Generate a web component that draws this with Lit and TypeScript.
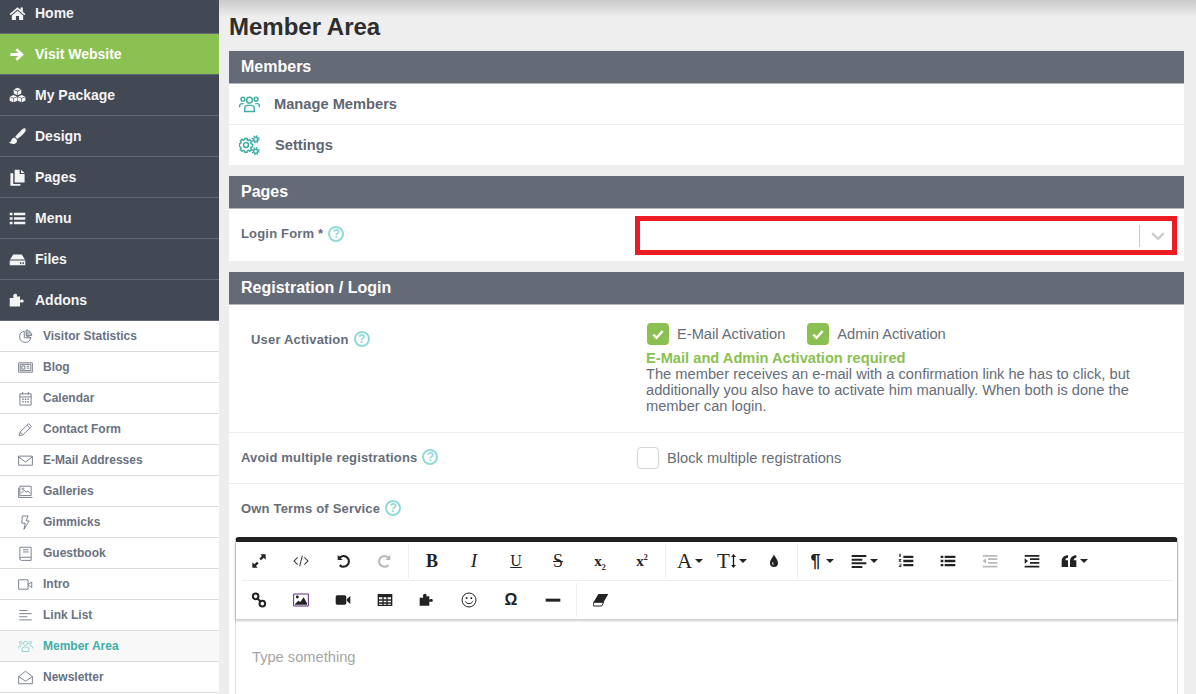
import { LitElement, html, css, svg } from "lit";
import { customElement } from "lit/decorators.js";

const solid: Record<string, unknown> = {
  home: svg`<path d="M12 3.200 .8 12.600l1.500 1.800L12 6.200l9.700 8.200 1.500-1.800-3.700-3.100V3.600h-3.200v3.200z"/><path d="M12 8 4 14.800V21h5.800v-5.400h4.400V21H20v-6.200z"/>`,
  arrow: svg`<path d="M2 10h11L9 6l2.600-2.800L21 12l-9.400 8.800L9 18l4-4H2z"/>`,
  cubes: svg`<path d="M12 1l5 2.200-5 2.200-5-2.200zM6.600 4l5 2.200v5.300l-5-2.200zM12.400 6.200l5-2.200v5.300l-5 2.200z"/><path d="M6.300 11.200l5 2.200-5 2.200-5-2.200zM.9 14.200l5 2.200v5.300l-5-2.200zM6.700 16.400l5-2.200v5.300l-5 2.200z"/><path d="M17.700 11.200l5 2.200-5 2.200-5-2.200zM12.300 14.200l5 2.200v5.300l-5-2.200zM18.100 16.400l5-2.200v5.300l-5 2.200z"/>`,
  brush: svg`<path d="M23 .8c-1-.9-2.700-.3-4.100.9C16 4.300 11 9.500 8.800 12.500l3 2.900c3-2 8.600-7 11-10.200C23.700 3.700 24 1.900 23 .8z"/><path d="M7.800 13.300c-3 .3-4.200 2.600-4.600 4.400-.3 1.300-1.300 2.300-3.200 2.500 2.200 2.400 7.600 3.400 10.300.6 1.600-1.700 1.100-3.900 0-5.200z"/>`,
  files: svg`<path d="M8 1h7v6h7v12H8z"/><path d="M17 1l5 4.500h-5z"/><path d="M2 6h4v15h10v2.500H2z"/>`,
  list: svg`<path d="M1 4h4v3.500H1zM7 4h16v3.500H7zM1 10.200h4v3.500H1zM7 10.200h16v3.500H7zM1 16.500h4V20H1zM7 16.500h16V20H7z"/>`,
  hdd: svg`<path d="M6 5h12l4.500 7h-21z"/><path fill-rule="evenodd" d="M1 13.500h22V20H1zM16.500 16a1.200 1.200 0 1 0 .1 0zM20 16a1.200 1.200 0 1 0 .1 0z"/>`,
  puzzle: svg`<path d="M9 2.500c2 0 2.700 1.300 2.200 2.800l-.3 1.200h4.600v5l1.300-.7c1.500-.6 4 0 4 2s-2.500 2.500-4 1.900l-1.300-.7v6.500H1V8.500h5.400l-.4-2.800C5.700 4 7 2.500 9 2.500z"/>`,
  link: svg`<g fill="none" stroke="currentColor" stroke-width="3"><circle cx="7" cy="6.500" r="4.200"/><circle cx="17" cy="17.500" r="4.200"/><path d="M9.500 10l5 4"/></g>`,
  image: svg`<path d="M1 3h22v18H1z" fill="none" stroke="#5b2a86" stroke-width="1.500"/><path d="M3 18l5-5 3 2 5-7 5 9v2H3z"/><circle cx="6.500" cy="7.500" r="2.200"/>`,
  video: svg`<path d="M1 7.500A2.500 2.500 0 0 1 3.500 5h11A2.500 2.500 0 0 1 17 7.500v9a2.500 2.500 0 0 1-2.500 2.500h-11A2.500 2.500 0 0 1 1 16.500zM18 10.500l5-4.500v12l-5-4.500z"/>`,
  table: svg`<path fill-rule="evenodd" d="M1 3h22v18H1zM3 8v3h5V8zm7 0v3h4V8zm6 0v3h5V8zM3 13v2.500h5V13zm7 0v2.500h4V13zm6 0v2.500h5V13zM3 17.500V19h5v-1.500zm7 0V19h4v-1.500zm6 0V19h5v-1.500z"/>`,
  minus: svg`<path d="M1 10h22v4.500H1z"/>`,
  expand: svg`<path d="M14 2h8v8l-3-3-4 4-2.500-2.500 4-4zM10 22H2v-8l3 3 4-4 2.500 2.500-4 4z"/>`,
  undo: svg`<path d="M4 3v7.500h7.500L8.700 7.700a6.300 6.300 0 1 1-.5 9.200l-2.300 2.500A9.700 9.700 0 1 0 6.300 5.300z"/>`,
  redo: svg`<path d="M20 3v7.500h-7.500l2.800-2.800a6.300 6.300 0 1 0 .5 9.200l2.300 2.500a9.700 9.700 0 1 1-.4-14.100z"/>`,
  drop: svg`<path fill-rule="evenodd" d="M12 2c1 4 6 8 6 13a6 6 0 0 1-12 0c0-5 5-9 6-13zm-2.500 12c-.6 2.500 1 4.500 2.500 4.500-1-1-1.500-2.500-1-4.500z"/>`,
  alignLeft: svg`<path d="M1 3h22v3H1zM1 8.500h16v3H1zM1 14h22v3H1zM1 19.500h16v3H1z"/>`,
  ol: svg`<path d="M8 4h15v3.500H8zM8 10.200h15v3.500H8zM8 16.500h15V20H8zM2 1h2v5H2zM1 9h4v1l-2 2h2v1H1v-1l2-2H1zM1 16h4v5H1v-1h3v-1H2v-1h2v-1H1z"/>`,
  ul: svg`<path d="M1 4h4v3.500H1zM7 4h16v3.500H7zM1 10.200h4v3.500H1zM7 10.200h16v3.500H7zM1 16.500h4V20H1zM7 16.500h16V20H7z"/>`,
  outdent: svg`<path d="M1 3h22v2.600H1zM9 8h14v2.600H9zM9 13.400h14V16H9zM1 19h22v2.600H1zM6 8v8l-5-4z"/>`,
  indent: svg`<path d="M1 3h22v2.600H1zM9 8h14v2.600H9zM9 13.400h14V16H9zM1 19h22v2.600H1zM1 8v8l5-4z"/>`,
  quote: svg`<path d="M10.500 11H6.600c0-2.300 1.300-4 3.900-4V3.500C5 3.500 1 7 1 12.500V21h9.500zM23 11h-3.900c0-2.300 1.300-4 3.900-4V3.500c-5.500 0-9.500 3.500-9.500 9V21H23z"/>`,
  eraser: svg`<path d="M8 3h15l-7 12H1z"/><path d="M1 15.500h15L13 21H1.500L0 20z" fill="#fff" stroke="currentColor" stroke-width="1.500"/>`,
};

const line: Record<string, unknown> = {
  pie: svg`<path d="M10 3.500a9 9 0 1 0 10.500 10.500H10z"/><path d="M13 1.500a9 9 0 0 1 9 9h-9z"/><path d="M13 11l8 3M13 5h6M13 8h8"/>`,
  card: svg`<path d="M1 4.500h22v15H1z"/><path d="M3.500 7h17v10h-17zM6 9.500h5v5H6zM14 10h4M14 13h4"/>`,
  calendar: svg`<path d="M3 4.500h18v18H3zM3 9.500h18M7.500 1.500v4M16.500 1.500v4"/><path d="M7 13h2M11 13h2M15 13h2M7 17h2M11 17h2M15 17h2" stroke-width="2.400"/>`,
  pencil: svg`<path d="M2 22l1.500-6L17 2.500l4.500 4.500L8 20.500zM14.500 5l4.500 4.500M3.500 16 8 20.500"/>`,
  mail: svg`<path d="M1 5h22v14.500H1zM1 6l11 8.500L23 6"/>`,
  gallery: svg`<path d="M3 3.500h18v15H3zM1 21.500h22M1 6v15.500"/><path d="M5 15l5-5 3 3 3-2 4 4"/><circle cx="8" cy="7.500" r="1.300"/>`,
  bolt: svg`<path d="M7 1.500h9l-3 8h5L9.500 23l2-10H6z"/>`,
  book: svg`<path d="M3 20V2h18v21H5.500A2.500 2.500 0 0 1 3 20.500 2.500 2.500 0 0 1 5.500 18H21M8 6h9M8 9.500h9"/>`,
  camera: svg`<path d="M1 4.500h15v15H1zM16 12l6-4v9z"/>`,
  lines: svg`<path d="M2 4h13M2 9h20M2 14h13M2 19h20"/>`,
  users: svg`<circle cx="12" cy="7" r="3.300"/><circle cx="4.500" cy="6" r="2.200"/><circle cx="19.500" cy="6" r="2.200"/><path d="M6.500 20v-3.500a3.500 3.500 0 0 1 3.500-3.500h4a3.500 3.500 0 0 1 3.500 3.500V20zM.8 15v-1.500A2.500 2.500 0 0 1 3.300 11h2.200M23.200 15v-1.500a2.500 2.500 0 0 0-2.500-2.500h-2.200"/>`,
  envelope: svg`<path d="M1 10.500 12 2l11 8.500V22H1zM1 10.500l11 7.500 11-7.500"/>`,
  gears: svg`<path d="M9.500 6l1.500.4 1.300-1 2 2-.9 1.300.6 1.500 1.500.3v2.900l-1.500.3-.6 1.500.9 1.300-2 2-1.300-.9-1.500.6-.3 1.500H6.600l-.3-1.500-1.500-.6-1.300.9-2-2 .9-1.300-.6-1.500L.3 13V10l1.500-.3.6-1.500-.9-1.300 2-2 1.300 1 1.500-.6.300-1.300h2.900z"/><circle cx="8" cy="11.500" r="2.800"/><circle cx="19" cy="5" r="2.300"/><circle cx="19" cy="18.500" r="2.300"/><circle cx="19" cy="5" r="3.800" stroke-dasharray="1.500 1.500" stroke-width="1.800"/><circle cx="19" cy="18.500" r="3.800" stroke-dasharray="1.500 1.500" stroke-width="1.800"/>`,
  smile: svg`<circle cx="12" cy="12" r="10.500"/><path d="M6.500 14c1.500 4.500 9.500 4.500 11 0"/><path d="M8.500 8v2.500M15.500 8v2.500" stroke-width="2.500"/>`,
  code: svg`<path d="M7 6.500 1.500 12 7 17.500M17 6.500l5.500 5.500-5.500 5.500M14 4l-4 16"/>`,
};

const solidIcon = (n: string, cls = "") => html`<svg class="ic ${cls}" viewBox="0 0 24 24" fill="currentColor">${solid[n]}</svg>`;
const lineIcon = (n: string, cls = "") => html`<svg class="ic ${cls}" viewBox="0 0 24 24" fill="none" stroke="currentColor" stroke-width="1.500">${line[n]}</svg>`;

const mainNav: [string, string, boolean][] = [
  ["home", "Home", false], ["arrow", "Visit Website", true], ["cubes", "My Package", false],
  ["brush", "Design", false], ["files", "Pages", false], ["list", "Menu", false],
  ["hdd", "Files", false], ["puzzle", "Addons", false],
];
const subNav: [string, string][] = [
  ["pie", "Visitor Statistics"], ["card", "Blog"], ["calendar", "Calendar"], ["pencil", "Contact Form"],
  ["mail", "E-Mail Addresses"], ["gallery", "Galleries"], ["bolt", "Gimmicks"], ["book", "Guestbook"],
  ["camera", "Intro"], ["lines", "Link List"], ["users", "Member Area"], ["envelope", "Newsletter"],
];

@customElement("app-root")
export class AppRoot extends LitElement {
  static styles = css`
    :host { display: flex; width: 1196px; height: 694px; overflow: hidden; background: #eeeeee;
      font-family: "Liberation Sans", Arial, sans-serif; color: #636a76; }
    * { box-sizing: border-box; }
    .ic { display: block; flex: none; }
    .side { width: 219px; flex: none; background: #fff; margin-top: -7px; }
    .nav { height: 41px; display: flex; align-items: center; background: #424854; color: #f4f4f4;
      border-bottom: 1px solid #626873; font-size: 14px; font-weight: bold; padding-left: 9px; }
    .nav .ic { width: 17px; height: 17px; margin-right: 9px; }
    .nav.on { background: #8bc152; color: #fff; }
    .sub { height: 31px; display: flex; align-items: center; border-bottom: 1px solid #dcdcdc;
      font-size: 12px; font-weight: bold; color: #6b7280; padding-left: 18px; }
    .sub .ic { width: 15px; height: 15px; margin-right: 10px; stroke-width: 1.400; }
    .sub.on { background: #f8f8f8; color: #3fada8; }
    .sub.on .ic { color: #7fd0cc; }
    .main { flex: 1; min-width: 0; padding: 0 12px 0 10px;
      background: linear-gradient(#cacaca, #eeeeee 17px) no-repeat; }
    h1 { margin: 0; height: 51px; padding-top: 13px; font-size: 24px; line-height: 27px; font-weight: bold; color: #2e2e2e; }
    .head { height: 33px; background: #656b76; border-bottom: 1px solid #b3b6bb; color: #fff; font-size: 16px;
      font-weight: bold; padding-left: 12px; line-height: 31px; }
    .body { background: #fff; margin-bottom: 11px; }
    .link { height: 41px; display: flex; align-items: center; padding-left: 10px; font-size: 11pt; font-weight: bold;
      color: #5f6672; border-bottom: 1px solid #eeeeee; }
    .link:last-child { height: 40px; border-bottom: 0; }
    .link .ic { width: 21px; height: 21px; color: #3fada8; margin-right: 14px; stroke-width: 1.700; }
    .link .gear { margin-right: 15px; }
    .label { font-size: 13px; font-weight: bold; color: #666d78; display: flex; align-items: center; letter-spacing: .18px; }
    .help { width: 16px; height: 16px; margin-left: 5px; border: 2px solid #93dad6; border-radius: 50%; color: #93dad6;
      font-size: 12px; line-height: 12px; font-weight: bold; text-align: center; letter-spacing: 0; }
    .login { height: 52px; display: flex; padding: 7px 7px 0 12px; justify-content: space-between; }
    .login .label { height: 35px; align-self: flex-start; }
    .select { width: 542px; height: 39px; border: 5px solid #ed1c24; display: flex; align-items: center; justify-content: flex-end; }
    .select i { width: 1px; height: 22px; background: #cccccc; }
    .chev { width: 32px; padding-left: 3px; display: flex; justify-content: center; }
    .chev svg { width: 14px; height: 14px; color: #cccccc; }
    .act { height: 128px; display: flex; border-bottom: 1px solid #eeeeee; padding: 18px 40px 0 22px; }
    .act .label { width: 395px; height: 34px; flex: none; align-self: flex-start; padding-bottom: 2px; }
    .opts { display: flex; align-items: center; height: 22px; font-size: 11pt; color: #666d78; padding-left: 1px; }
    .box { width: 22px; height: 22px; border-radius: 4px; background: #8bc152; display: flex; align-items: center; justify-content: center; margin-right: 8px; flex: none; }
    .box svg { width: 14px; height: 14px; }
    .box.off { background: #fff; border: 1px solid #d5d5d5; }
    .opts span { margin-right: 22px; }
    .green { color: #8bc152; font-weight: bold; font-size: 11pt; line-height: 16px; margin-top: 5px; }
    .para { font-size: 11pt; line-height: 16px; color: #666d78; width: 500px; }
    .avoid { height: 51px; border-bottom: 1px solid #eeeeee; display: flex; align-items: center; padding-left: 12px; font-size: 11pt; color: #666d78; }
    .avoid .label { width: 396px; flex: none; padding-bottom: 2px; }
    .terms { height: 53px; padding: 16px 0 0 12px; }
    .editor { margin: 0 6px 0 6px; border-top: 5px solid #222222; border-radius: 4px 4px 0 0; border-left: 1px solid #dddddd;
      border-right: 1px solid #dddddd; background: #fff; height: 200px; }
    .toolbar { box-shadow: 0 1px 2px 1px rgba(0,0,0,.2); height: 77px; padding-left: 2px; position: relative; }
    .row { display: flex; height: 38px; align-items: center; color: #222222; }
    .rule { height: 1px; background: #eeeeee; margin: 0 4px; }
    .b { width: 42px; height: 34px; display: flex; align-items: center; justify-content: center; font-family: "Liberation Serif", serif; font-size: 18px; flex: none; }
    .b .ic { width: 16px; height: 16px; }
    .b.dim { color: #b9b9b9; }
    .b.code .ic { color: #444; stroke-width: 1.600; }
    .b.bold { font-weight: bold; }
    .b.ital { font-style: italic; font-size: 19px; }
    .b.und { text-decoration: underline; font-size: 16px; }
    .b.str { text-decoration: line-through; font-size: 18px; }
    .b.sc { font-size: 15px; font-weight: bold; }
    .b sub, .b sup { font-size: 8px; line-height: 0; }
    .b.big { font-size: 21px; }
    .b .arr { width: 5px; height: 14px; margin-left: 1px; }
    .b.para2 { font-size: 18px; font-family: "Liberation Sans", sans-serif; font-weight: bold; }
    .b.para2 .caret { margin-left: 5px; }
    .b.om { font-size: 16px; font-family: "Liberation Sans", sans-serif; font-weight: bold; }
    .caret { width: 0; height: 0; border: 4px solid transparent; border-top-color: #222; border-bottom: 0; margin-left: 3px; flex: none; }
    .sep { width: 1px; height: 34px; background: #eeeeee; margin: 0 2px; flex: none; }
    .sep.w { margin: 0 3px 0 2px; }
    .place { padding: 30px 0 0 16px; font-size: 11pt; line-height: 16px; color: #a6a6a6; }
  `;

  btn(name: string, cls = "", caret = false) {
    return html`<div class="b ${cls}">${solidIcon(name)}${caret ? html`<div class="caret"></div>` : ""}</div>`;
  }

  render() {
    const help = html`<div class="help">?</div>`;
    const check = html`<svg viewBox="0 0 24 24" fill="none" stroke="#fff" stroke-width="4"><path d="M4 13l5.500 5.500L20 7"/></svg>`;
    return html`
      <div class="side">
        ${mainNav.map(([i, t, on]) => html`<div class="nav ${on ? "on" : ""}">${solidIcon(i)}${t}</div>`)}
        ${subNav.map(([i, t]) => html`<div class="sub ${t === "Member Area" ? "on" : ""}">${lineIcon(i)}${t}</div>`)}
      </div>
      <div class="main">
        <h1>Member Area</h1>
        <div class="head">Members</div>
        <div class="body">
          <div class="link">${lineIcon("users")}Manage Members</div>
          <div class="link">${lineIcon("gears", "gear")}Settings</div>
        </div>
        <div class="head">Pages</div>
        <div class="body login">
          <div class="label">Login Form *${help}</div>
          <div class="select"><i></i><div class="chev"><svg viewBox="0 0 24 24" fill="none" stroke="currentColor" stroke-width="4"><path d="M2 7l10 10L22 7"/></svg></div></div>
        </div>
        <div class="head">Registration / Login</div>
        <div class="body">
          <div class="act">
            <div class="label">User Activation${help}</div>
            <div>
              <div class="opts"><div class="box">${check}</div><span>E-Mail Activation</span><div class="box">${check}</div><span>Admin Activation</span></div>
              <div class="green">E-Mail and Admin Activation required</div>
              <div class="para">The member receives an e-mail with a confirmation link he has to click, but additionally you also have to activate him manually. When both is done the member can login.</div>
            </div>
          </div>
          <div class="avoid"><div class="label">Avoid multiple registrations${help}</div><div class="box off"></div>Block multiple registrations</div>
          <div class="terms"><div class="label">Own Terms of Service${help}</div></div>
          <div class="editor">
            <div class="toolbar">
              <div class="row">
                ${this.btn("expand")}
                <div class="b code">${lineIcon("code")}</div>
                ${this.btn("undo")}${this.btn("redo", "dim")}
                <div class="sep"></div>
                <div class="b bold">B</div><div class="b ital">I</div><div class="b und">U</div><div class="b str">S</div>
                <div class="b sc"><span>x<sub>2</sub></span></div><div class="b sc"><span>x<sup>2</sup></span></div>
                <div class="sep w"></div>
                <div class="b big">A<div class="caret"></div></div>
                <div class="b big">T<svg class="arr" viewBox="0 0 5 14" fill="currentColor"><path d="M2.500 0 5 3H3.200v8H5l-2.500 3L0 11h1.800V3H0z"/></svg><div class="caret"></div></div>
                ${this.btn("drop")}
                <div class="sep w"></div>
                <div class="b para2">¶<div class="caret"></div></div>
                ${this.btn("alignLeft", "", true)}${this.btn("ol")}${this.btn("ul")}${this.btn("outdent", "dim")}${this.btn("indent")}${this.btn("quote", "", true)}
              </div>
              <div class="rule"></div>
              <div class="row">
                ${this.btn("link")}${this.btn("image")}${this.btn("video")}${this.btn("table")}${this.btn("puzzle")}
                <div class="b">${lineIcon("smile")}</div>
                <div class="b om">Ω</div>
                ${this.btn("minus")}
                <div class="sep w"></div>
                ${this.btn("eraser")}
              </div>
            </div>
            <div class="place">Type something</div>
          </div>
        </div>
      </div>
    `;
  }
}
